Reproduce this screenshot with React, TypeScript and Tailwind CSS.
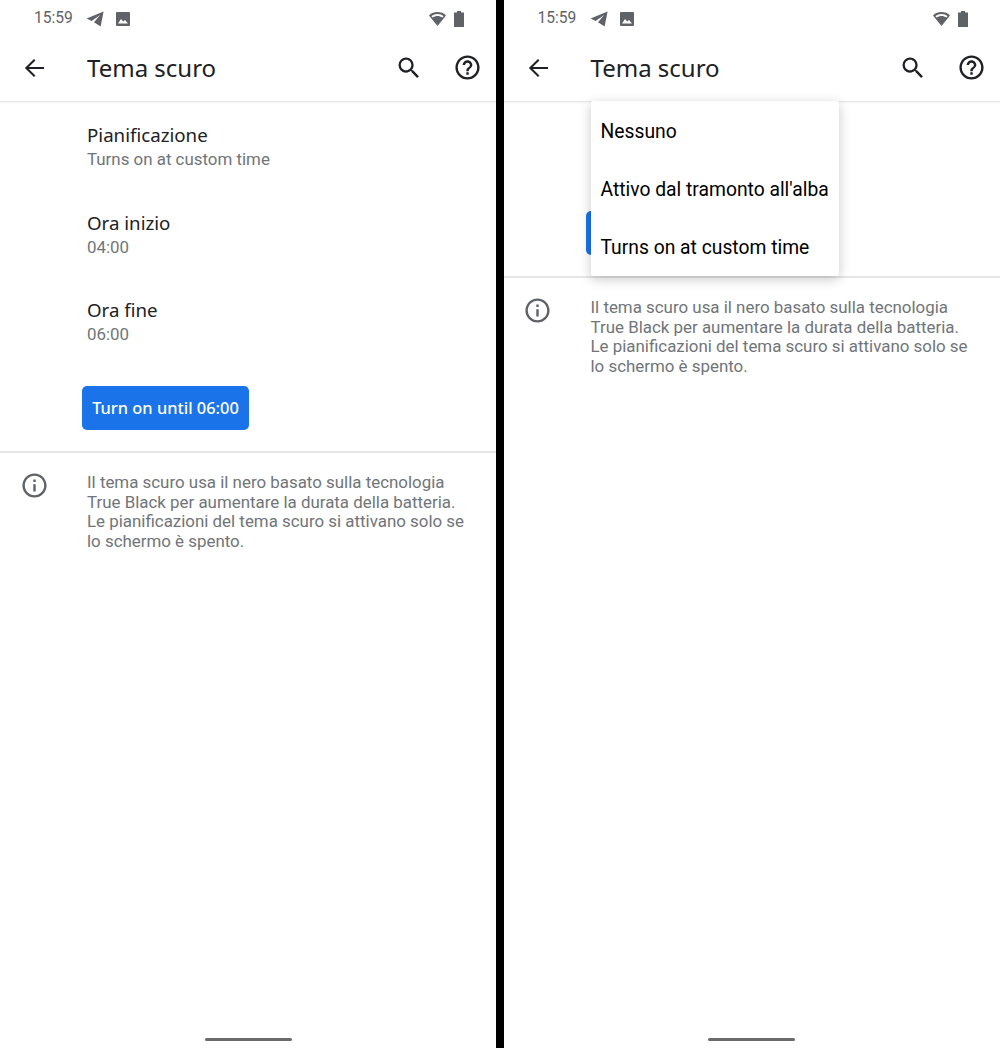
const ROBOTO = "font-['Roboto',sans-serif]";
const TITLE = "font-['Noto_Sans',sans-serif]";

function Telegram() {
  return (
    <svg width="18" height="16" viewBox="0 0 18 16" className="fill-[#5f6368]">
      <path d="M17.6 0.6 L0.6 7.6 L5.6 10 L14.2 4 L8 11.2 L14.6 15.6 Z" />
    </svg>
  );
}

function Picture() {
  return (
    <svg width="14" height="14" viewBox="0 0 14 14">
      <rect width="14" height="14" rx="1" fill="#5f6368" />
      <path d="M2 11.5 L5 7 L7.2 9.6 L9 8 L12 11.5 Z" fill="#fff" />
    </svg>
  );
}

function Wifi() {
  return (
    <svg width="17" height="14" viewBox="0 0 17 14">
      <path d="M0 3.4 C4.6 -1 12.4 -1 17 3.4 L8.5 14 Z" fill="#5f6368" />
      <path d="M2.4 4.2 C5.8 1.4 11.2 1.4 14.6 4.2 L13.4 5.6 C10.6 3.4 6.4 3.4 3.6 5.6 Z" fill="#fff" />
    </svg>
  );
}

function Battery() {
  return (
    <svg width="10" height="16" viewBox="0 0 10 16" className="fill-[#5f6368]">
      <path d="M3 0 H7 V1.4 H10 V16 H0 V1.4 H3 Z" />
    </svg>
  );
}

function Back() {
  return (
    <svg width="24" height="24" viewBox="0 0 24 24" className="fill-[#202124]">
      <path d="M22 11H6.8l6.6-6.6L12 3 2.9 12l9.1 9 1.4-1.4L6.8 13H22z" />
    </svg>
  );
}

function Search() {
  return (
    <svg width="28" height="28" viewBox="0 0 24 24" className="fill-[#202124]">
      <path d="M15.5 14h-.79l-.28-.27A6.47 6.47 0 0 0 16 9.5 6.5 6.5 0 1 0 9.5 16c1.61 0 3.09-.59 4.23-1.57l.27.28v.79l5 4.99L20.49 19l-4.99-5zm-6 0C7.01 14 5 11.99 5 9.5S7.01 5 9.5 5 14 7.01 14 9.5 11.99 14 9.5 14z" />
    </svg>
  );
}

function Help() {
  return (
    <svg width="29" height="29" viewBox="0 0 24 24" className="fill-[#202124]">
      <path d="M11 18h2v-2h-2v2zm1-16C6.48 2 2 6.48 2 12s4.48 10 10 10 10-4.48 10-10S17.52 2 12 2zm0 18c-4.41 0-8-3.59-8-8s3.59-8 8-8 8 3.59 8 8-3.59 8-8 8zm0-14c-2.21 0-4 1.79-4 4h2c0-1.1.9-2 2-2s2 .9 2 2c0 2-3 1.75-3 5h2c0-2.25 3-2.5 3-5 0-2.21-1.79-4-4-4z" />
    </svg>
  );
}

function Info() {
  return (
    <svg width="29" height="29" viewBox="0 0 24 24" className="fill-[#5f6368]">
      <path d="M11 7h2v2h-2V7zm0 4h2v6h-2v-6zm1-9C6.48 2 2 6.48 2 12s4.48 10 10 10 10-4.48 10-10S17.52 2 12 2zm0 18c-4.41 0-8-3.59-8-8s3.59-8 8-8 8 3.59 8 8-3.59 8-8 8z" />
    </svg>
  );
}

function Header() {
  return (
    <>
      <div className="flex h-[36px] items-center pl-[34px] pr-[32px] pt-[1px]">
        <span className={`${ROBOTO} w-[52px] pt-[1px] text-[15.6px] text-[#5f6368]`}>15:59</span>
        <Telegram />
        <span className="w-[12px]" />
        <Picture />
        <span className="flex-1" />
        <Wifi />
        <span className="w-[8px]" />
        <Battery />
      </div>
      <div className="flex h-[66px] items-center border-b border-[#e6e6e6] pb-[2px] shadow-[0_1px_2px_rgba(0,0,0,0.05)]">
        <div className="w-[87px] pl-[22px]">
          <Back />
        </div>
        <span className={`${TITLE} flex-1 text-[24px] text-[#202124]`}>Tema scuro</span>
        <div className="flex items-center">
          <Search />
        </div>
        <div className="mr-[14px] ml-[30px] flex items-center">
          <Help />
        </div>
      </div>
    </>
  );
}

function Setting({ title, sub }: { title: string; sub: string }) {
  return (
    <div className="h-[87.5px] pl-[87px] pt-[19px]">
      <div className={`${TITLE} text-[18.7px] leading-[27px] text-[#202124]`}>{title}</div>
      <div className={`${ROBOTO} text-[16.9px] leading-[22px] text-[#70757a]`}>{sub}</div>
    </div>
  );
}

function InfoBlock() {
  return (
    <div className="flex pt-[19px]">
      <div className="-mt-[1px] w-[87px] pl-[19.5px]">
        <Info />
      </div>
      <p className={`${ROBOTO} whitespace-nowrap pt-[1px] text-[16.9px] leading-[19.7px] text-[#70757a]`}>
        Il tema scuro usa il nero basato sulla tecnologia
        <br />
        True Black per aumentare la durata della batteria.
        <br />
        Le pianificazioni del tema scuro si attivano solo se
        <br />
        lo schermo è spento.
      </p>
    </div>
  );
}

function Pill() {
  return (
    <div className="flex h-[48px] items-end justify-center pb-[7px]">
      <div className="h-[3px] w-[87px] rounded-full bg-[#6b6b6b]" />
    </div>
  );
}

function Button({ label }: { label?: string }) {
  return (
    <button className={`${TITLE} ml-[82px] block h-[44px] w-[167px] rounded-[5px] bg-[#1a73e8] pt-[2px] text-[16.4px] font-medium text-white`}>
      {label}
    </button>
  );
}

function MenuItem({ label }: { label: string }) {
  return (
    <div className={`${ROBOTO} flex h-[58px] items-center pl-[10px] pt-[4px] text-[19.3px] text-black`}>{label}</div>
  );
}

export default function App() {
  return (
    <div className="flex h-[1048px] w-[1000px] overflow-hidden bg-black">
      <div className="flex h-full w-[496px] flex-col bg-white">
        <Header />
        <div className="flex-1">
          <div className="h-[351px] border-b-2 border-[#e6e6e6]">
            <Setting title="Pianificazione" sub="Turns on at custom time" />
            <Setting title="Ora inizio" sub="04:00" />
            <Setting title="Ora fine" sub="06:00" />
            <div className="mt-[21px]">
              <Button label="Turn on until 06:00" />
            </div>
          </div>
          <InfoBlock />
        </div>
        <Pill />
      </div>
      <div className="ml-[7.5px] flex h-full w-[496.5px] flex-col bg-white">
        <Header />
        <div className="relative flex-1">
          <div className="h-[176px] border-b-2 border-[#e6e6e6] pt-[109px]">
            <Button />
          </div>
          <InfoBlock />
          <div className="absolute -top-[1px] left-[87px] h-[175px] w-[248px] rounded-[2px] bg-white shadow-[0_3px_12px_rgba(0,0,0,0.22)]">
            <MenuItem label="Nessuno" />
            <MenuItem label="Attivo dal tramonto all'alba" />
            <MenuItem label="Turns on at custom time" />
          </div>
        </div>
        <Pill />
      </div>
    </div>
  );
}
